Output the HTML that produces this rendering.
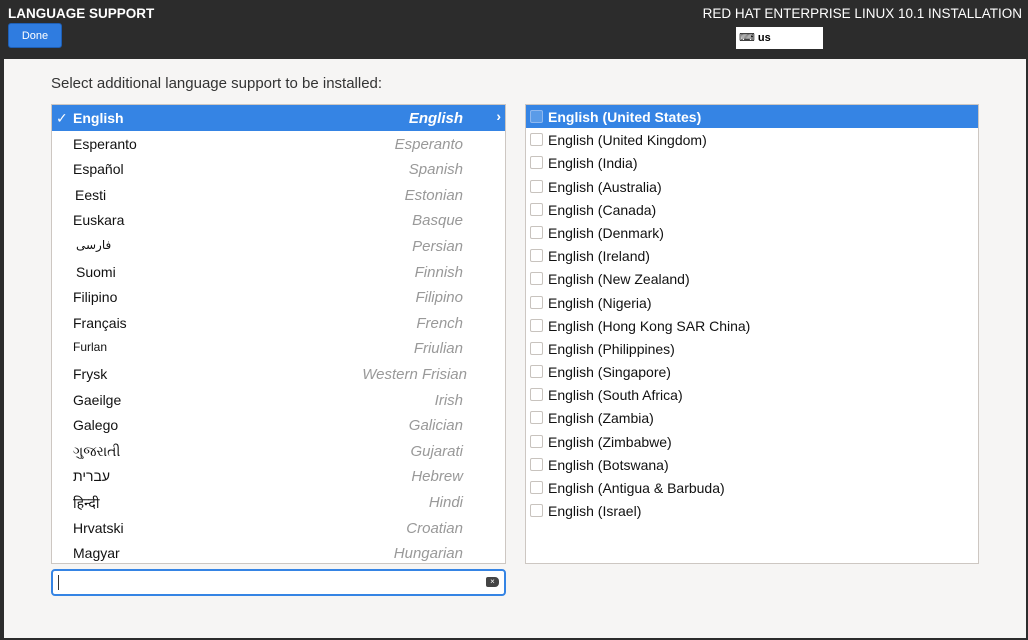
<!DOCTYPE html><html><head><meta charset="utf-8"><style>
*{margin:0;padding:0;box-sizing:border-box}
body{width:1028px;height:640px;background:#2c2c2c;font-family:"Liberation Sans","DejaVu Sans",sans-serif;position:relative;overflow:hidden}
.hdr{position:absolute;left:0;top:0;width:1028px;height:59px;background:#2c2c2c}
.title{position:absolute;left:8px;top:6px;color:#fff;font-weight:bold;font-size:13.5px}
.done{position:absolute;left:8px;top:23px;width:54px;height:25px;background:#2f7ce0;border-radius:3px;color:#fff;font-size:11px;text-align:center;line-height:25px;border:1px solid #1e5fb5}
.rh{position:absolute;right:6px;top:6px;color:#fff;font-size:13.5px}
.kb{position:absolute;left:736px;top:27px;width:87px;height:22px;background:#fff;font-size:11px;font-weight:bold;line-height:22px;padding-left:3px}
.main{position:absolute;left:4px;top:59px;width:1022px;height:579px;background:#f6f5f4}
.lbl{position:absolute;left:51px;top:75px;font-size:15px;color:#333}
.list{position:absolute;background:#fff;border:1px solid #cdc7c2;overflow:hidden}
.l{left:51px;top:104px;width:455px;height:460px}
.r{left:525px;top:104px;width:454px;height:460px}
.row{height:25.6px;position:relative;font-size:14px;color:#111;overflow:hidden}
.row .n{position:absolute;left:21px;top:5px}
.row .e{position:absolute;right:42px;top:5px;font-style:italic;color:#999;font-size:15px}
.sel{background:#3584e4;color:#fff;font-weight:bold}
.sel .e{color:#fff;font-weight:bold}
.rr{height:23.2px;position:relative;font-size:14px;color:#111;padding-left:22px;line-height:24px;overflow:hidden}
.rr i{position:absolute;left:4px;top:5px;width:13px;height:13px;border:1px solid #c8c3be;border-radius:2px;background:#fff}
.rr.sel{background:#3584e4;color:#fff}
.rr.sel i{background:#5a9be8;border-color:#8fb8ef}
.search{position:absolute;left:51px;top:569px;width:455px;height:27px;background:#fff;border:2px solid #3584e4;border-radius:4px}
</style></head><body>
<div class="hdr"><div class="title">LANGUAGE SUPPORT</div><div class="done">Done</div><div class="rh">RED HAT ENTERPRISE LINUX 10.1 INSTALLATION</div><div class="kb">⌨ us</div></div>
<div class="main"></div>
<div class="lbl">Select additional language support to be installed:</div>
<div class="list l">
<div class="row sel"><span style="position:absolute;left:4px;top:5px">✓</span><span class="n">English</span><span class="e">English</span><span style="position:absolute;right:4px;top:3px">›</span></div>
<div class="row"><span class="n">Esperanto</span><span class="e">Esperanto</span></div>
<div class="row"><span class="n">Español</span><span class="e">Spanish</span></div>
<div class="row"><span class="n" style="left:23px">Eesti</span><span class="e">Estonian</span></div>
<div class="row"><span class="n">Euskara</span><span class="e">Basque</span></div>
<div class="row"><span class="n" style="left:24px;font-size:12px">فارسی</span><span class="e">Persian</span></div>
<div class="row"><span class="n" style="left:24px">Suomi</span><span class="e">Finnish</span></div>
<div class="row"><span class="n">Filipino</span><span class="e">Filipino</span></div>
<div class="row"><span class="n">Français</span><span class="e">French</span></div>
<div class="row"><span class="n" style="font-size:12px">Furlan</span><span class="e">Friulian</span></div>
<div class="row"><span class="n">Frysk</span><span class="e" style="right:38px">Western Frisian</span></div>
<div class="row"><span class="n">Gaeilge</span><span class="e">Irish</span></div>
<div class="row"><span class="n">Galego</span><span class="e">Galician</span></div>
<div class="row"><span class="n">ગુજરાતી</span><span class="e">Gujarati</span></div>
<div class="row"><span class="n">עברית</span><span class="e">Hebrew</span></div>
<div class="row"><span class="n">हिन्दी</span><span class="e">Hindi</span></div>
<div class="row"><span class="n">Hrvatski</span><span class="e">Croatian</span></div>
<div class="row"><span class="n">Magyar</span><span class="e">Hungarian</span></div>
</div>
<div class="search"><span style="position:absolute;left:5px;top:4px;width:1px;height:15px;background:#333"></span><span style="position:absolute;right:5px;top:6px;width:13px;height:10px;background:#444;border-radius:2px 4px 4px 2px;color:#fff;font-size:8px;line-height:10px;text-align:center">×</span></div>
<div class="list r">
<div class="rr sel" style="font-weight:bold"><i></i>English (United States)</div>
<div class="rr"><i></i>English (United Kingdom)</div>
<div class="rr"><i></i>English (India)</div>
<div class="rr"><i></i>English (Australia)</div>
<div class="rr"><i></i>English (Canada)</div>
<div class="rr"><i></i>English (Denmark)</div>
<div class="rr"><i></i>English (Ireland)</div>
<div class="rr"><i></i>English (New Zealand)</div>
<div class="rr"><i></i>English (Nigeria)</div>
<div class="rr"><i></i>English (Hong Kong SAR China)</div>
<div class="rr"><i></i>English (Philippines)</div>
<div class="rr"><i></i>English (Singapore)</div>
<div class="rr"><i></i>English (South Africa)</div>
<div class="rr"><i></i>English (Zambia)</div>
<div class="rr"><i></i>English (Zimbabwe)</div>
<div class="rr"><i></i>English (Botswana)</div>
<div class="rr"><i></i>English (Antigua &amp; Barbuda)</div>
<div class="rr"><i></i>English (Israel)</div>
</div>
</body></html>
